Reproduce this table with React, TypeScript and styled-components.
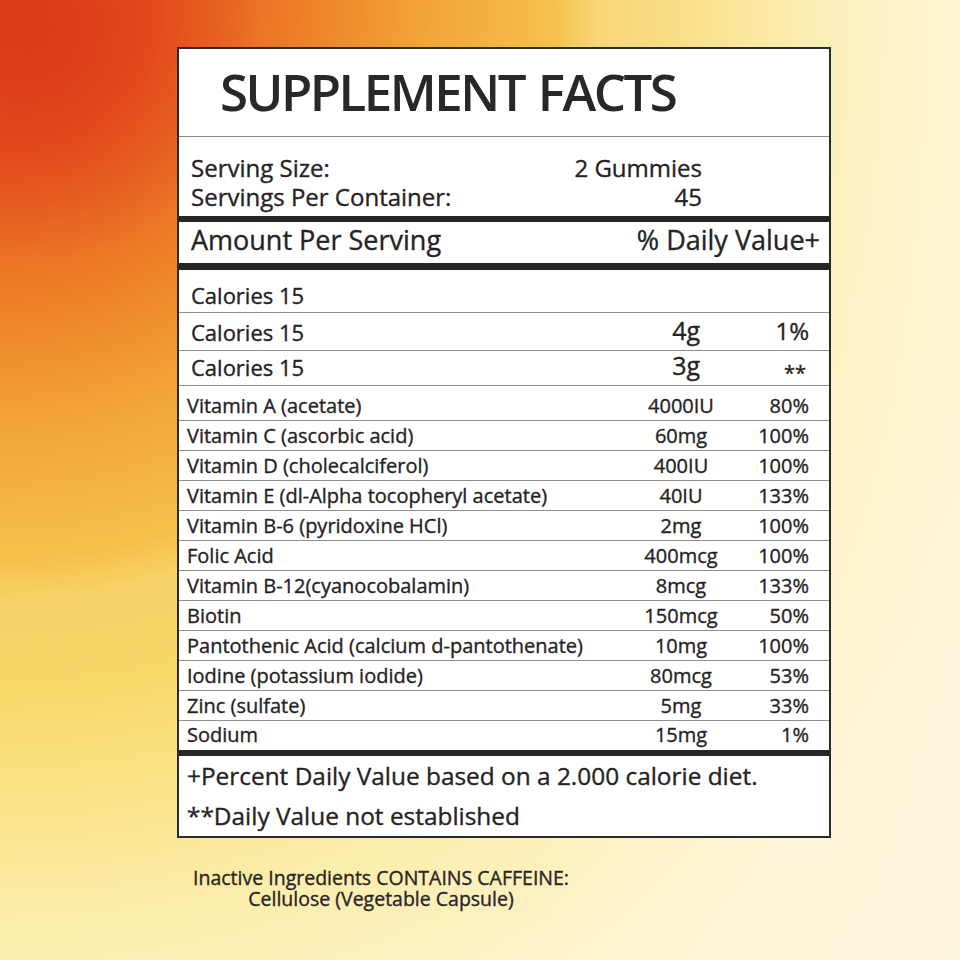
import React from "react";
import styled, { createGlobalStyle } from "styled-components";

const Global = createGlobalStyle`
  html, body { margin: 0; padding: 0; }
  body { background: #fdf5d8; }
`;

const Page = styled.div`
  width: 960px;
  height: 960px;
  box-sizing: border-box;
  padding: 47px 0 0 177px;
  display: flex;
  flex-direction: column;
  font-family: "Open Sans", "Noto Sans", sans-serif;
  color: #262324;
  -webkit-text-stroke: 0.35px #262324;
  overflow: hidden;
  background:
    linear-gradient(90deg, rgba(253, 246, 220, 0) 0%, rgba(253, 246, 220, 0) 55%, rgba(253, 246, 222, 0.75) 100%),
    radial-gradient(circle at 0 0, rgba(255, 255, 255, 0) 560px, rgba(255, 250, 210, 0.18) 600px, rgba(255, 255, 255, 0) 700px),
    radial-gradient(circle at 40px 40px, rgba(214, 50, 22, 0.55) 0px, rgba(214, 50, 22, 0) 220px),
    radial-gradient(
      circle at 0 0,
      #df3d1a 0px,
      #e6521e 150px,
      #ed7f28 300px,
      #f3a83a 440px,
      #f6c54c 580px,
      #f9de76 740px,
      #fbedaa 920px,
      #fdf4d2 1150px,
      #fdf6dc 1360px
    );
`;

const Panel = styled.div`
  width: 654px;
  box-sizing: border-box;
  border: 2px solid #2b2b2b;
  background: #ffffff;
  display: flex;
  flex-direction: column;
`;

const TitleBar = styled.div`
  height: 88px;
  box-sizing: border-box;
  padding: 16px 0 0 41px;
  border-bottom: 1px solid #8a8a8a;
`;

const Title = styled.h1`
  margin: 0;
  font-size: 51px;
  line-height: 53px;
  font-weight: 600;
  letter-spacing: -2.5px;
  word-spacing: 3px;
  color: #2a2728;
  -webkit-text-stroke: 0;
`;

const ServingBlock = styled.div`
  padding: 16px 127px 5px 12px;
  display: flex;
  flex-direction: column;
`;

const ServingLine = styled.div`
  display: flex;
  justify-content: space-between;
  font-size: 24px;
  line-height: 29px;
`;

const ThickBar = styled.div<{ $h: number }>`
  height: ${(p) => p.$h}px;
  background: #262626;
`;

const HeaderRow = styled.div`
  height: 41px;
  box-sizing: border-box;
  padding: 0 9px 0 12px;
  display: flex;
  justify-content: space-between;
  align-items: flex-start;
  font-size: 27px;
  line-height: 35px;
`;

const Row = styled.div<{ $h: number; $pb: number; $pl: number; $border: boolean }>`
  height: ${(p) => p.$h}px;
  box-sizing: border-box;
  display: grid;
  grid-template-columns: 1fr 100px 78px;
  align-items: end;
  padding: 0 20px ${(p) => p.$pb}px ${(p) => p.$pl}px;
  border-bottom: ${(p) => (p.$border ? "1px solid #8f8f8f" : "none")};
`;

const Label = styled.div<{ $size: number }>`
  font-size: ${(p) => p.$size}px;
  line-height: 1;
  white-space: nowrap;
`;

const Amount = styled.div<{ $size: number; $right?: boolean }>`
  font-size: ${(p) => p.$size}px;
  line-height: 1;
  text-align: ${(p) => (p.$right ? "right" : "center")};
  padding-right: ${(p) => (p.$right ? "31px" : "0")};
  white-space: nowrap;
`;

const Percent = styled.div<{ $size: number }>`
  font-size: ${(p) => p.$size}px;
  line-height: 1;
  text-align: right;
  white-space: nowrap;
`;

const Stars = styled.span`
  display: inline-block;
  font-size: 20px;
  transform: translateY(5px);
  padding-right: 3px;
`;

const Footnotes = styled.div`
  padding: 0 0 0 8px;
  font-size: 24.4px;
  line-height: 40px;
`;

const Inactive = styled.div`
  margin: 29px 0 0 4px;
  width: 400px;
  text-align: center;
  font-size: 19.5px;
  line-height: 21px;
  color: #2a2526;
`;

type Nutrient = { name: string; amount: string; pct: string };

const nutrients: Nutrient[] = [
  { name: "Vitamin A (acetate)", amount: "4000IU", pct: "80%" },
  { name: "Vitamin C (ascorbic acid)", amount: "60mg", pct: "100%" },
  { name: "Vitamin D (cholecalciferol)", amount: "400IU", pct: "100%" },
  { name: "Vitamin E (dl-Alpha tocopheryl acetate)", amount: "40IU", pct: "133%" },
  { name: "Vitamin B-6 (pyridoxine HCl)", amount: "2mg", pct: "100%" },
  { name: "Folic Acid", amount: "400mcg", pct: "100%" },
  { name: "Vitamin B-12(cyanocobalamin)", amount: "8mcg", pct: "133%" },
  { name: "Biotin", amount: "150mcg", pct: "50%" },
  { name: "Pantothenic Acid (calcium d-pantothenate)", amount: "10mg", pct: "100%" },
  { name: "Iodine (potassium iodide)", amount: "80mcg", pct: "53%" },
  { name: "Zinc (sulfate)", amount: "5mg", pct: "33%" },
  { name: "Sodium", amount: "15mg", pct: "1%" },
];

export default function App() {
  return (
    <>
      <Global />
      <Page>
        <Panel>
          <TitleBar>
            <Title>SUPPLEMENT FACTS</Title>
          </TitleBar>
          <ServingBlock>
            <ServingLine>
              <span>Serving Size:</span>
              <span>2 Gummies</span>
            </ServingLine>
            <ServingLine>
              <span>Servings Per Container:</span>
              <span>45</span>
            </ServingLine>
          </ServingBlock>
          <ThickBar $h={6} />
          <HeaderRow>
            <span>Amount Per Serving</span>
            <span>% Daily Value+</span>
          </HeaderRow>
          <ThickBar $h={7} />
          <Row $h={43} $pb={6.5} $pl={12} $border>
            <Label $size={22}>Calories 15</Label>
            <Amount $size={25} $right></Amount>
            <Percent $size={24}></Percent>
          </Row>
          <Row $h={38} $pb={7.5} $pl={12} $border>
            <Label $size={22}>Calories 15</Label>
            <Amount $size={25} $right>4g</Amount>
            <Percent $size={24}>1%</Percent>
          </Row>
          <Row $h={35} $pb={7.5} $pl={12} $border>
            <Label $size={22}>Calories 15</Label>
            <Amount $size={25} $right>3g</Amount>
            <Percent $size={24}>
              <Stars>**</Stars>
            </Percent>
          </Row>
          {nutrients.map((n, i) => {
            const last = i === nutrients.length - 1;
            return (
              <Row
                key={n.name}
                $h={i === 0 ? 35 : last ? 29 : 30}
                $pb={last ? 5 : 4.5}
                $pl={8}
                $border={!last}
              >
                <Label $size={20}>{n.name}</Label>
                <Amount $size={20}>{n.amount}</Amount>
                <Percent $size={20}>{n.pct}</Percent>
              </Row>
            );
          })}
          <ThickBar $h={6} />
          <Footnotes>
            <div>+Percent Daily Value based on a 2.000 calorie diet.</div>
            <div>**Daily Value not established</div>
          </Footnotes>
        </Panel>
        <Inactive>
          Inactive Ingredients CONTAINS CAFFEINE:
          <br />
          Cellulose (Vegetable Capsule)
        </Inactive>
      </Page>
    </>
  );
}
